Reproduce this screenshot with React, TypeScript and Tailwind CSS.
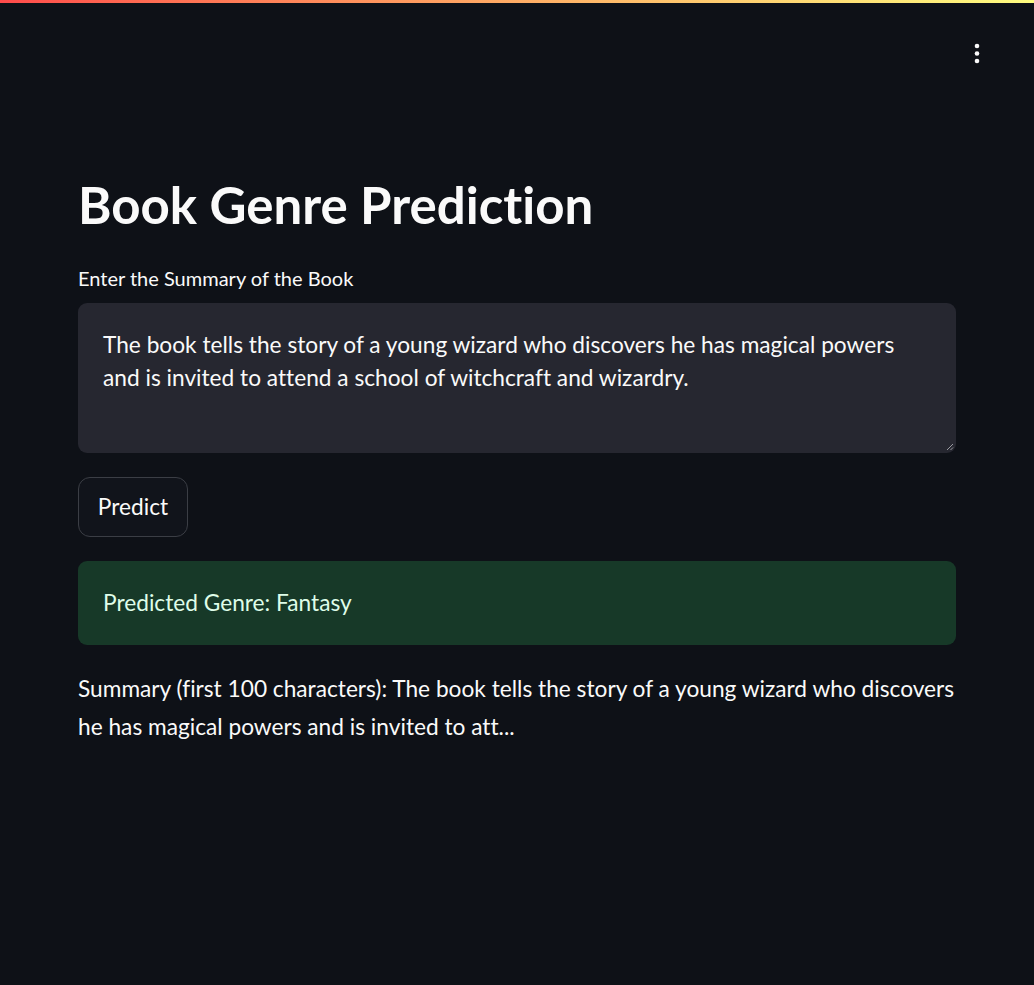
import React from "react";

function Kebab() {
  return (
    <svg width="6" height="22" viewBox="0 0 6 22" fill="#fafafa">
      <circle cx="3" cy="3" r="2.3" />
      <circle cx="3" cy="10.5" r="2.3" />
      <circle cx="3" cy="18" r="2.3" />
    </svg>
  );
}

export default function App() {
  return (
    <div className="min-h-screen bg-[#0e1117] font-['Lato',sans-serif] text-[#fafafa] [font-variant-ligatures:none]">
      <div className="h-[3px] bg-linear-to-r from-[#ff4b4b] to-[#fffd80]" />
      <header className="flex h-[72px] justify-end pr-[54px] pt-[40px]">
        <Kebab />
      </header>
      <main className="flex w-[956px] flex-col pl-[78px] pt-[100px]">
        <h1 className="text-[51px] font-bold leading-[60px]">Book Genre Prediction</h1>
        <label className="mt-[31px] text-[20px] leading-[1.2]">Enter the Summary of the Book</label>
        <div className="relative mt-[13px] h-[150px] rounded-[9px] bg-[#262730] px-[25px] pt-[25px] text-[22.7px] leading-[33px]">
          <div className="whitespace-nowrap">The book tells the story of a young wizard who discovers he has magical powers</div>
          <div className="whitespace-nowrap">and is invited to attend a school of witchcraft and wizardry.</div>
          <svg className="absolute bottom-[2px] right-[2px]" width="8" height="8" viewBox="0 0 8 8" stroke="#9a9ba1" strokeWidth="1">
            <line x1="1" y1="7" x2="7" y2="1" />
            <line x1="4.5" y1="7" x2="7" y2="4.5" />
          </svg>
        </div>
        <div className="mt-[24px] flex">
          <button className="flex h-[60px] w-[110px] items-center justify-center rounded-[12px] border border-[#3b3e45] bg-[#11141b] text-[22.7px] text-[#fafafa]">
            Predict
          </button>
        </div>
        <div className="mt-[24px] flex h-[84px] items-center rounded-[9px] bg-[#173928] px-[25px] text-[22.7px] text-[#dffde9]">
          Predicted Genre: Fantasy
        </div>
        <p className="mt-[25px] text-[22.7px] leading-[38px]">
          <span className="block whitespace-nowrap">Summary (first 100 characters): The book tells the story of a young wizard who discovers</span>
          <span className="block whitespace-nowrap">he has magical powers and is invited to att...</span>
        </p>
      </main>
    </div>
  );
}
